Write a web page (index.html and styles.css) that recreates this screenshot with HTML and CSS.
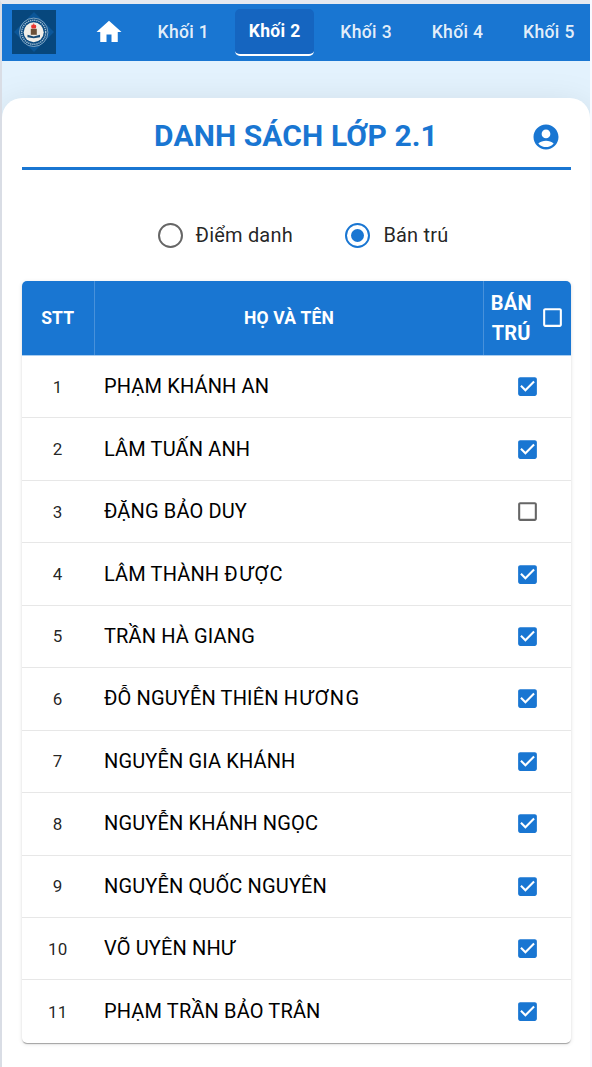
FILE: index.html
```html
<!DOCTYPE html>
<html lang="vi">
<head>
<meta charset="utf-8">
<title>Danh sách lớp 2.1</title>
<link rel="stylesheet" href="styles.css">
</head>
<body>
<svg class="defs" width="0" height="0">
  <symbol id="checked" viewBox="0 0 24 24"><path d="M19 3H5c-1.11 0-2 .9-2 2v14c0 1.1.89 2 2 2h14c1.11 0 2-.9 2-2V5c0-1.1-.89-2-2-2zm-9 14l-5-5 1.41-1.41L10 14.17l7.59-7.59L19 8l-9 9z"/></symbol>
  <symbol id="blank" viewBox="0 0 24 24"><path d="M19 5v14H5V5h14m0-2H5c-1.1 0-2 .9-2 2v14c0 1.1.9 2 2 2h14c1.1 0 2-.9 2-2V5c0-1.1-.9-2-2-2z"/></symbol>
</svg>
<div class="app">
  <header class="navbar">
    <svg class="logo" viewBox="0 0 44 44">
      <rect width="44" height="44" fill="#07477d"/>
      <path d="M22 2L42 22 22 42 2 22z" fill="#0b5698"/>
      <circle cx="21.7" cy="22.3" r="14.2" fill="#0a4a80" stroke="#9dbbd2" stroke-width=".8"/>
      <circle cx="21.7" cy="22.3" r="12" fill="none" stroke="#a9c3d6" stroke-width="1.4" stroke-dasharray="1.3 .8"/>
      <circle cx="21.7" cy="22.3" r="10" fill="#f0eee8"/>
      <path d="M19.800 18.500c-1.300-2-.3-3.200.3-4.200l.8 1 .9-2.300 1 2.300.9-.6c.8 1.500.6 2.800-.2 3.800z" fill="#e9322d"/>
      <rect x="18.800" y="18.800" width="6" height="6" fill="#6c5139"/>
      <path d="M15.500 24.800l6.200 1.600 6.300-1.600v2.400l-6.300 1-6.200-1z" fill="#174b76"/>
    </svg>
    <nav class="tabs">
      <a class="tab home"><svg viewBox="0 0 24 24"><path d="M10 20v-6h4v6h5v-8h3L12 3 2 12h3v8z"/></svg></a>
      <a class="tab">Khối 1</a>
      <a class="tab active">Khối 2</a>
      <a class="tab">Khối 3</a>
      <a class="tab">Khối 4</a>
      <a class="tab">Khối 5</a>
    </nav>
  </header>
  <main class="card">
    <div class="title-row">
      <h1>DANH SÁCH LỚP 2.1</h1>
      <svg class="account" viewBox="0 0 24 24"><path d="M12 2C6.480 2 2 6.480 2 12s4.480 10 10 10 10-4.480 10-10S17.520 2 12 2zm0 4c1.930 0 3.500 1.570 3.500 3.500S13.930 13 12 13s-3.500-1.570-3.500-3.500S10.070 6 12 6zm0 14c-2.030 0-4.430-.82-6.140-2.880C7.550 15.800 9.680 15 12 15s4.450.8 6.140 2.120C16.430 19.180 14.030 20 12 20z"/></svg>
    </div>
    <div class="modes">
      <label class="mode"><span class="radio"></span><span class="mode-label">Điểm danh</span></label>
      <label class="mode"><span class="radio on"></span><span class="mode-label">Bán trú</span></label>
    </div>
    <section class="table">
      <div class="row head">
        <span class="cell">STT</span>
        <span class="cell">HỌ VÀ TÊN</span>
        <span class="cell boarding"><span class="label">BÁN TRÚ</span><svg class="box"><use href="#blank"/></svg></span>
      </div>
      <div class="row"><span class="num">1</span><span class="name">PHẠM KHÁNH AN</span><svg class="box"><use href="#checked"/></svg></div>
      <div class="row"><span class="num">2</span><span class="name">LÂM TUẤN ANH</span><svg class="box"><use href="#checked"/></svg></div>
      <div class="row"><span class="num">3</span><span class="name">ĐẶNG BẢO DUY</span><svg class="box off"><use href="#blank"/></svg></div>
      <div class="row"><span class="num">4</span><span class="name">LÂM THÀNH <span class="horn">ĐƯỢC</span></span><svg class="box"><use href="#checked"/></svg></div>
      <div class="row"><span class="num">5</span><span class="name">TRẦN HÀ GIANG</span><svg class="box"><use href="#checked"/></svg></div>
      <div class="row"><span class="num">6</span><span class="name">ĐỖ NGUYỄN THIÊN <span class="horn">HƯƠNG</span></span><svg class="box"><use href="#checked"/></svg></div>
      <div class="row"><span class="num">7</span><span class="name">NGUYỄN GIA KHÁNH</span><svg class="box"><use href="#checked"/></svg></div>
      <div class="row"><span class="num">8</span><span class="name">NGUYỄN KHÁNH NGỌC</span><svg class="box"><use href="#checked"/></svg></div>
      <div class="row"><span class="num">9</span><span class="name">NGUYỄN QUỐC NGUYÊN</span><svg class="box"><use href="#checked"/></svg></div>
      <div class="row"><span class="num">10</span><span class="name">VÕ UYÊN NHƯ</span><svg class="box"><use href="#checked"/></svg></div>
      <div class="row"><span class="num">11</span><span class="name">PHẠM TRẦN BẢO TRÂN</span><svg class="box"><use href="#checked"/></svg></div>
    </section>
  </main>
</div>
</body>
</html>
```
FILE: styles.css
```css
* { box-sizing: border-box; }
html, body { margin: 0; height: 100%; overflow: hidden; }
body { background: #f8f9ff; font-family: Roboto, sans-serif; color: rgba(0, 0, 0, .87); }
svg { display: block; flex: none; fill: currentColor; }
.defs { display: none; }
.app { width: 590px; height: 1067px; overflow: hidden; border-top: 4px solid #e5e9f0; border-left: 2px solid #d9dde5; background: #e3f2fd; display: flex; flex-direction: column; }
.navbar { height: 57px; flex: none; background: #1976d2; display: flex; align-items: flex-start; padding: 5px 0 0 10px; overflow: hidden; }
.logo { width: 44px; height: 44px; margin-top: 1px; }
.tabs { display: flex; gap: 12.900px; margin-left: 29.200px; }
.tab { width: 78.500px; height: 46.500px; flex: none; border-radius: 5px; border-bottom: 2px solid transparent; display: flex; align-items: center; justify-content: center; color: rgba(255, 255, 255, .9); font-size: 17.500px; font-weight: 500; letter-spacing: .38px; white-space: nowrap; padding-top: 1px; }
.tab.home { width: 46px; color: #fff; padding-left: 1px; }
.home svg { width: 30px; height: 30px; }
.tab.active { background: #1565c0; color: #fff; font-weight: 700; border-bottom-color: #fff; padding: 0; }
.card { flex: 1; margin-top: 36.500px; background: #fff; border-radius: 20px 20px 0 0; padding: 0 19.500px; box-shadow: 0 10px 38px rgba(0, 0, 0, .13); }
.title-row { height: 72px; border-bottom: 3px solid #1976d2; display: grid; grid-template-columns: 50px 1fr 50px; align-items: center; padding-top: 8px; color: #1976d2; }
h1 { grid-column: 2; margin: 0; text-align: center; font-size: 30px; line-height: 40px; font-weight: 700; letter-spacing: .1px; white-space: nowrap; }
.account { width: 30px; height: 30px; justify-self: center; margin-top: 2px; }
.modes { height: 111.500px; padding: 20px 0 0 14px; display: flex; align-items: center; justify-content: center; gap: 52.500px; }
.mode { display: flex; align-items: center; gap: 13px; font-size: 20px; letter-spacing: .19px; }
.mode-label { padding-bottom: 1px; }
.radio { width: 25px; height: 25px; border: 2.500px solid #666; border-radius: 50%; display: grid; place-items: center; }
.radio.on { border-color: #1976d2; }
.radio.on::after { content: ""; width: 13px; height: 13px; border-radius: 50%; background: #1976d2; }
.table { border-radius: 5px; overflow: hidden; box-shadow: 0 2px 1px -1px rgba(0, 0, 0, .2), 0 1px 1px rgba(0, 0, 0, .14), 0 1px 4px rgba(0, 0, 0, .12); }
.row { height: 62.450px; display: grid; grid-template-columns: 72.500px 389px 1fr; align-items: center; border-bottom: 1px solid #e7e7e7; }
.row:last-child { border-bottom: 0; }
.row.head { height: 75px; background: #1976d2; color: #fff; font-size: 17.500px; font-weight: 700; letter-spacing: .2px; border-bottom-color: #a9cdf0; align-items: stretch; }
.cell { display: flex; align-items: center; justify-content: center; }
.cell + .cell { border-left: 1px solid #4791db; }
.boarding { gap: 8px; font-size: 20px; line-height: 30px; padding: 0 0 1px 1px; }
.label { width: 42px; text-align: center; }
.num { text-align: center; font-size: 17px; letter-spacing: .3px; }
.name { color: #000; font-size: 20px; letter-spacing: .14px; padding: 0 0 1px 10px; white-space: nowrap; }
.horn { letter-spacing: 1.400px; }
.box { width: 25px; height: 25px; justify-self: center; color: #1976d2; }
.num ~ .box { margin-left: 1px; }
.boarding .box { color: #fff; }
.box.off { color: #666; }
```
